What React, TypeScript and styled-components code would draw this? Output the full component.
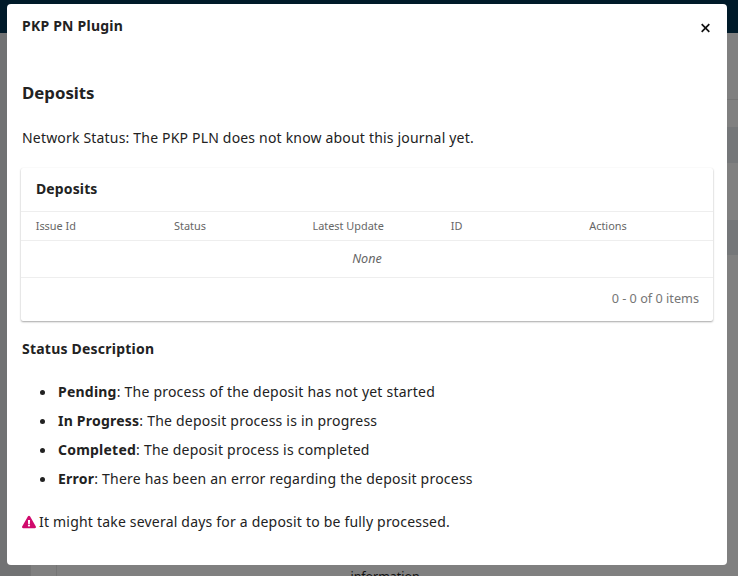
import React from "react";
import styled, { createGlobalStyle } from "styled-components";
import { FaExclamationTriangle } from "react-icons/fa";

const Global = createGlobalStyle`
  html, body { margin: 0; padding: 0; height: 100%; background: #808080; }
  body { font-family: "Noto Sans", sans-serif; color: #222; font-size: 14px; }
`;

const Page = styled.div`
  width: 738px;
  height: 576px;
  overflow: hidden;
  position: relative;
  background: #808080;
`;
const TopBar = styled.header`
  height: 33px;
  background: #001a29;
`;
const Body = styled.div`
  display: flex;
  height: 543px;
`;
const Rail = styled.nav`
  width: 30px;
  background: #717273;
`;
const SubRail = styled.aside`
  width: 27px;
  border-left: 1px solid #757575;
  border-right: 1px solid #757575;
  box-sizing: border-box;
`;
const Main = styled.main`
  flex: 1;
  display: flex;
  flex-direction: column;
`;
const Row = styled.div<{ $h: number; $band?: boolean; $line?: boolean }>`
  height: ${(p) => p.$h}px;
  flex: none;
  box-sizing: border-box;
  background: ${(p) => (p.$band ? "#757779" : "transparent")};
  border-bottom: ${(p) => (p.$line ? "1px solid #757575" : "none")};
`;
const Behind = styled.div`
  margin-top: 312px;
  text-align: center;
  font-size: 12.4px;
  color: #111;
  line-height: 20px;
  padding-right: 25px;
`;

const Modal = styled.section`
  position: absolute;
  left: 7px;
  top: 4px;
  width: 720px;
  height: 561px;
  background: #fff;
  border-radius: 4px;
  box-sizing: border-box;
  display: flex;
  flex-direction: column;
`;
const ModalHeader = styled.div`
  display: flex;
  justify-content: space-between;
  align-items: flex-start;
  padding: 12px 15px 0;
  height: 50px;
  box-sizing: border-box;
  flex: none;
`;
const ModalTitle = styled.h1`
  margin: 0;
  font-size: 14px;
  line-height: 20px;
  font-weight: 700;
  letter-spacing: 0.22px;
`;
const CloseButton = styled.button`
  all: unset;
  display: block;
  width: 12px;
  height: 12px;
  margin-top: 6px;
  color: #111;
`;
const CloseGlyph = styled.svg`
  display: block;
  width: 12px;
  height: 12px;
`;
const ModalContent = styled.div`
  padding: 0 14px 0 15px;
  flex: 1;
`;
const Heading = styled.h2`
  margin: 26px 0 0;
  font-size: 16.8px;
  line-height: 26px;
  font-weight: 700;
`;
const Paragraph = styled.p`
  margin: 22px 0 0;
  font-size: 14px;
  line-height: 20px;
  letter-spacing: 0.185px;
`;
const Card = styled.div`
  margin: 20px 0 0 -1px;
  background: #fff;
  border-radius: 2px;
  box-shadow: 0 1px 2px rgba(0, 0, 0, 0.35), 0 0 1px rgba(0, 0, 0, 0.06);
  height: 153px;
  display: flex;
  flex-direction: column;
`;
const CardTitle = styled.h3`
  margin: 0;
  padding: 0 15px;
  height: 44px;
  line-height: 42px;
  font-size: 14px;
  font-weight: 700;
  letter-spacing: 0.12px;
  box-sizing: border-box;
  border-bottom: 1px solid #eee;
`;
const Table = styled.table`
  width: 100%;
  table-layout: fixed;
  border-collapse: collapse;
`;
const Th = styled.th`
  height: 28px;
  padding: 0 0 0 14.7px;
  text-align: left;
  font-size: 10.9px;
  font-weight: 400;
  color: #666;
  border-bottom: 1px solid #eee;
  box-sizing: border-box;
`;
const EmptyCell = styled.td`
  height: 37px;
  padding: 0;
  text-align: center;
  font-size: 12.6px;
  font-style: italic;
  color: #666;
  border-bottom: 1px solid #eee;
  box-sizing: border-box;
`;
const CardFooter = styled.div`
  flex: 1;
  display: flex;
  align-items: center;
  justify-content: flex-end;
  padding: 0 14px 3px;
  font-size: 12.7px;
  color: #767676;
`;
const SubHeading = styled.h4`
  margin: 18px 0 0;
  font-size: 14px;
  line-height: 20px;
  font-weight: 700;
  letter-spacing: 0.22px;
`;
const List = styled.ul`
  margin: 23px 0 0;
  padding: 0 0 0 36px;
  list-style: none;
`;
const Item = styled.li`
  font-size: 14px;
  line-height: 20px;
  margin-bottom: 9px;
  letter-spacing: 0.22px;

  &::before {
    content: "";
    display: inline-block;
    width: 5px;
    height: 5px;
    margin: 0 13px 0 -18px;
    border-radius: 50%;
    background: #222;
    vertical-align: 2px;
  }
`;
const Note = styled.p`
  margin: 23px 0 0;
  font-size: 14px;
  line-height: 20px;
  letter-spacing: 0.2px;
  display: flex;
  align-items: center;
  gap: 3px;
`;
const WarnIcon = styled(FaExclamationTriangle)`
  color: #d00a6c;
  width: 14px;
  height: 14px;
  flex: none;
`;

const columns = ["Issue Id", "Status", "Latest Update", "ID", "Actions"];
const statuses: [string, string][] = [
  ["Pending", "The process of the deposit has not yet started"],
  ["In Progress", "The deposit process is in progress"],
  ["Completed", "The deposit process is completed"],
  ["Error", "There has been an error regarding the deposit process"],
];

export default function App() {
  return (
    <Page>
      <Global />
      <TopBar />
      <Body>
        <Rail />
        <SubRail />
        <Main>
          <Row $h={67} $line />
          <Row $h={27} />
          <Row $h={36} $band />
          <Row $h={57} />
          <Row $h={35} $band />
          <Behind>information</Behind>
        </Main>
      </Body>
      <Modal role="dialog">
        <ModalHeader>
          <ModalTitle>PKP PN Plugin</ModalTitle>
          <CloseButton aria-label="Close">
            <CloseGlyph viewBox="0.5 0 12 12" fill="none">
              <path d="M2.2 2.2l7.6 7.6M9.8 2.2l-7.6 7.6" stroke="currentColor" strokeWidth="1.7" />
            </CloseGlyph>
          </CloseButton>
        </ModalHeader>
        <ModalContent>
          <Heading>Deposits</Heading>
          <Paragraph>Network Status: The PKP PLN does not know about this journal yet.</Paragraph>
          <Card>
            <CardTitle>Deposits</CardTitle>
            <Table>
              <thead>
                <tr>
                  {columns.map((c) => (
                    <Th key={c}>{c}</Th>
                  ))}
                </tr>
              </thead>
              <tbody>
                <tr>
                  <EmptyCell colSpan={5}>None</EmptyCell>
                </tr>
              </tbody>
            </Table>
            <CardFooter>0 - 0 of 0 items</CardFooter>
          </Card>
          <SubHeading>Status Description</SubHeading>
          <List>
            {statuses.map(([k, v]) => (
              <Item key={k}>
                <strong>{k}</strong>: {v}
              </Item>
            ))}
          </List>
          <Note>
            <WarnIcon />
            It might take several days for a deposit to be fully processed.
          </Note>
        </ModalContent>
      </Modal>
    </Page>
  );
}
